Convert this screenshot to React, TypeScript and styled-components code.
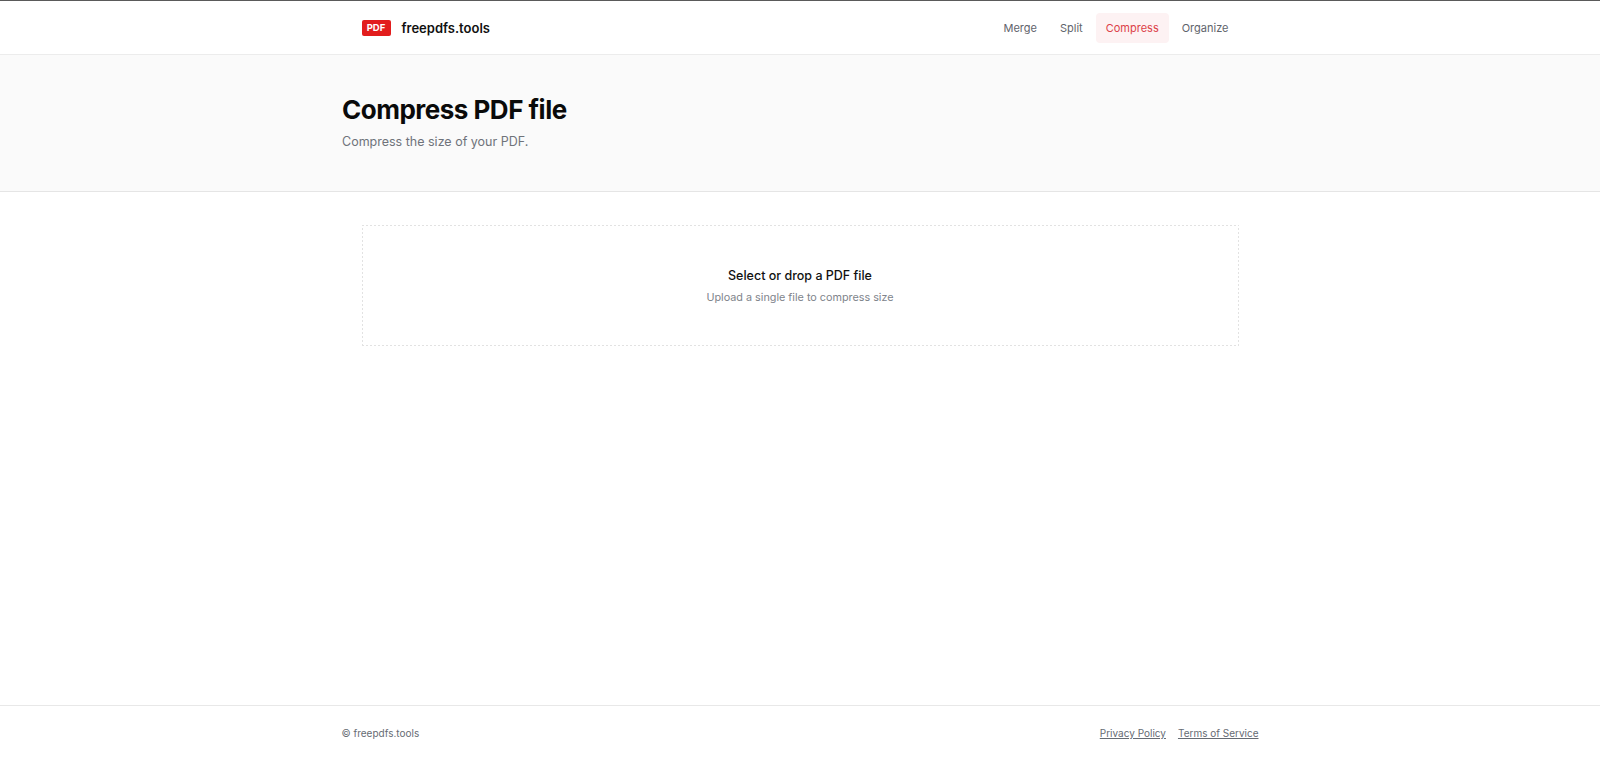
import React from "react";
import styled, { createGlobalStyle } from "styled-components";

const Global = createGlobalStyle`
  html, body { margin: 0; padding: 0; background: #fff; }
  body { font-family: Inter, "Liberation Sans", sans-serif; }
  #root { min-height: 760px; }
`;

const Page = styled.div`
  height: 760px;
  display: flex;
  flex-direction: column;
  border-top: 1px solid #5a5a5a;
  box-sizing: border-box;
  overflow: hidden;
`;

const Header = styled.header`
  height: 53px;
  flex: none;
  border-bottom: 1px solid #ececec;
  display: flex;
  justify-content: center;
`;

const HeaderInner = styled.div`
  width: 877px;
  display: flex;
  align-items: center;
  justify-content: space-between;
`;

const Brand = styled.a`
  display: flex;
  align-items: center;
  gap: 11px;
  font-size: 13px;
  font-weight: 600;
  color: #111;
`;

const Badge = styled.span`
  width: 29px;
  height: 16px;
  background: #e21d1d;
  border-radius: 2px;
  color: #fff;
  font-size: 9.5px;
  font-weight: 700;
  display: flex;
  align-items: center;
  justify-content: center;
`;

const Nav = styled.nav`
  display: flex;
  align-items: center;
  gap: 3px;
`;

const NavLink = styled.a<{ $active?: boolean }>`
  height: 30px;
  padding: 0 10px;
  border-radius: 4px;
  display: flex;
  align-items: center;
  font-size: 11px;
  font-weight: 400;
  color: ${(p) => (p.$active ? "#dc4148" : "#5f646c")};
  background: ${(p) => (p.$active ? "#fdf2f3" : "transparent")};
`;

const Hero = styled.section`
  height: 136px;
  flex: none;
  background: #fafafa;
  border-bottom: 1px solid #e5e5e5;
  display: flex;
  justify-content: center;
`;

const HeroInner = styled.div`
  width: 916px;
  padding-top: 40px;
  box-sizing: border-box;
`;

const Title = styled.h1`
  margin: 0;
  font-size: 26px;
  line-height: 30px;
  font-weight: 700;
  letter-spacing: -0.5px;
  color: #0a0a0a;
`;

const Subtitle = styled.p`
  margin: 8px 0 0;
  font-size: 12.5px;
  line-height: 18px;
  color: #6f737a;
`;

const Main = styled.main`
  flex: 1;
  display: flex;
  justify-content: center;
  padding-top: 33px;
`;

const Drop = styled.div`
  width: 877px;
  height: 121px;
  box-sizing: border-box;
  padding-top: 2px;
  background:
    repeating-linear-gradient(90deg, #e2e2e2 0 2px, transparent 2px 4px) top / 100% 1px no-repeat,
    repeating-linear-gradient(90deg, #e2e2e2 0 2px, transparent 2px 4px) bottom / 100% 1px no-repeat,
    repeating-linear-gradient(0deg, #e2e2e2 0 2px, transparent 2px 4px) left / 1px 100% no-repeat,
    repeating-linear-gradient(0deg, #e2e2e2 0 2px, transparent 2px 4px) right / 1px 100% no-repeat;
  display: flex;
  flex-direction: column;
  align-items: center;
  justify-content: center;
`;

const DropTitle = styled.div`
  font-size: 12.5px;
  line-height: 18px;
  font-weight: 500;
  color: #111;
`;

const DropHint = styled.div`
  margin-top: 5px;
  font-size: 10.8px;
  line-height: 16px;
  color: #80848b;
`;

const Footer = styled.footer`
  height: 54px;
  flex: none;
  border-top: 1px solid #e8e8e8;
  display: flex;
  justify-content: center;
`;

const FooterInner = styled.div`
  width: 917px;
  display: flex;
  align-items: center;
  justify-content: space-between;
  font-size: 10px;
  color: #666b73;
`;

const FooterLinks = styled.div`
  display: flex;
  gap: 12px;
`;

const FooterLink = styled.a`
  text-decoration: underline;
  color: #666b73;
`;

export default function App() {
  return (
    <>
      <Global />
      <Page>
        <Header>
          <HeaderInner>
            <Brand>
              <Badge>PDF</Badge>
              freepdfs.tools
            </Brand>
            <Nav>
              <NavLink>Merge</NavLink>
              <NavLink>Split</NavLink>
              <NavLink $active>Compress</NavLink>
              <NavLink>Organize</NavLink>
            </Nav>
          </HeaderInner>
        </Header>
        <Hero>
          <HeroInner>
            <Title>Compress PDF file</Title>
            <Subtitle>Compress the size of your PDF.</Subtitle>
          </HeroInner>
        </Hero>
        <Main>
          <Drop>
            <DropTitle>Select or drop a PDF file</DropTitle>
            <DropHint>Upload a single file to compress size</DropHint>
          </Drop>
        </Main>
        <Footer>
          <FooterInner>
            <span>© freepdfs.tools</span>
            <FooterLinks>
              <FooterLink>Privacy Policy</FooterLink>
              <FooterLink>Terms of Service</FooterLink>
            </FooterLinks>
          </FooterInner>
        </Footer>
      </Page>
    </>
  );
}
